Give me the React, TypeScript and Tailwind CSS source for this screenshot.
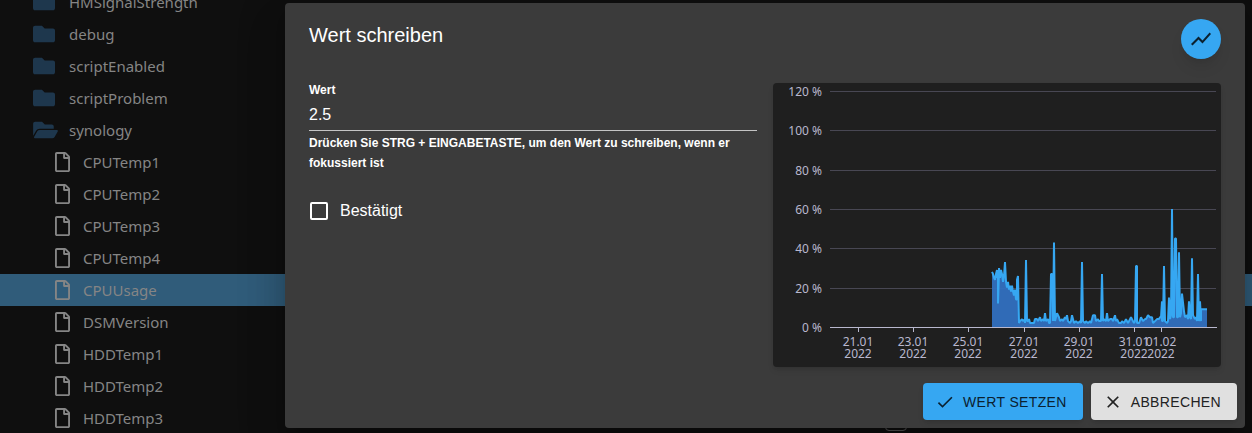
import { useState } from "react";
import { FaFolder, FaFolderOpen, FaRegFile } from "react-icons/fa";
import { MdCheck, MdClose, MdShowChart } from "react-icons/md";

type TreeItem = {
  name: string;
  kind: "folder" | "open" | "file";
};

const tree: TreeItem[] = [
  { name: "HMSignalStrength", kind: "folder" },
  { name: "debug", kind: "folder" },
  { name: "scriptEnabled", kind: "folder" },
  { name: "scriptProblem", kind: "folder" },
  { name: "synology", kind: "open" },
  { name: "CPUTemp1", kind: "file" },
  { name: "CPUTemp2", kind: "file" },
  { name: "CPUTemp3", kind: "file" },
  { name: "CPUTemp4", kind: "file" },
  { name: "CPUUsage", kind: "file" },
  { name: "DSMVersion", kind: "file" },
  { name: "HDDTemp1", kind: "file" },
  { name: "HDDTemp2", kind: "file" },
  { name: "HDDTemp3", kind: "file" },
];

// [x in the chart, CPU usage in percent]
const usage: [number, number][] = [
  [219, 28], [220, 27], [221, 25], [222, 24], [223, 27], [224, 29], [224, 25],
  [225, 28], [225, 12], [226, 28], [226, 30], [227, 25], [228, 29], [229, 27],
  [230, 23], [231, 26], [232, 33], [232, 33], [233, 23], [234, 20], [235, 23],
  [236, 19], [237, 21], [238, 18], [239, 21], [240, 18], [241, 16], [242, 19],
  [243, 14], [244, 14], [244, 24], [245, 26], [246, 2], [247, 3], [249, 4],
  [250, 3], [252, 4], [252, 2], [253, 34], [253, 34], [254, 3], [255, 3],
  [256, 4], [257, 2], [259, 2], [261, 2], [262, 4], [264, 4], [265, 3],
  [267, 5], [268, 3], [270, 4], [271, 3], [272, 7], [273, 3], [275, 4],
  [276, 2], [277, 2], [278, 27], [279, 27], [280, 3], [281, 43], [281, 43],
  [282, 3], [284, 7], [286, 5], [287, 3], [289, 4], [290, 3], [292, 5],
  [293, 4], [294, 6], [295, 3], [297, 2], [298, 3], [299, 6], [301, 2],
  [303, 3], [305, 2], [307, 3], [308, 2], [309, 33], [309, 33], [310, 3],
  [312, 2], [313, 3], [315, 2], [317, 3], [318, 2], [320, 6], [322, 6],
  [323, 3], [325, 4], [326, 3], [328, 3], [329, 27], [329, 27], [330, 3],
  [331, 4], [333, 3], [334, 7], [335, 3], [337, 4], [339, 4], [340, 3],
  [342, 6], [343, 3], [344, 4], [346, 2], [348, 2], [349, 3], [351, 2],
  [353, 4], [355, 2], [356, 3], [358, 5], [360, 3], [361, 2], [362, 3],
  [363, 31], [364, 31], [364, 2], [366, 2], [368, 5], [370, 3], [372, 4],
  [373, 4], [375, 6], [377, 5], [379, 5], [380, 2], [382, 3], [384, 4],
  [386, 4], [387, 5], [388, 5], [389, 13], [389, 3], [390, 3], [391, 31],
  [391, 31], [392, 3], [394, 2], [395, 3], [396, 15], [396, 15], [397, 4],
  [398, 6], [399, 60], [399, 60], [400, 5], [401, 5], [402, 45], [403, 45],
  [404, 5], [405, 5], [406, 38], [406, 38], [407, 5], [408, 7], [409, 17],
  [409, 17], [411, 8], [412, 5], [414, 6], [415, 4], [416, 13], [417, 5],
  [418, 4], [419, 35], [419, 35], [420, 6], [422, 4], [423, 5], [424, 3],
  [425, 27], [425, 27], [426, 3], [427, 13], [428, 3], [428, 9], [434, 9],
];

const days = [
  { x: 85, label: "21.01" },
  { x: 140, label: "23.01" },
  { x: 195, label: "25.01" },
  { x: 251, label: "27.01" },
  { x: 306, label: "29.01" },
  { x: 361, label: "31.01" },
  { x: 388, label: "01.02" },
];

const BASE = 244;
const toY = (value: number) => BASE - (value * 236) / 120;

function UsageChart() {
  const line = usage.map(([x, v]) => `${x},${toY(v).toFixed(1)}`).join(" ");

  return (
    <svg
      viewBox="0 0 448 284"
      role="img"
      aria-label="CPUUsage"
      className="block w-full rounded bg-[#1f1f1f] font-['Noto_Sans',sans-serif] text-[12px] shadow-md"
    >
      {[0, 20, 40, 60, 80, 100, 120].map((value) => {
        const y = Math.round(toY(value));
        return (
          <g key={value}>
            {value > 0 && (
              <rect x={57} y={y} width={386} height={1} fill="#484753" />
            )}
            <text x={49} y={y + 5} textAnchor="end" fill="#b9b8ce">
              {value} %
            </text>
          </g>
        );
      })}
      <polygon
        points={`219,${BASE} ${line} 434,${BASE}`}
        fill="#3170c0"
        fillOpacity={0.95}
      />
      <polyline
        points={line}
        fill="none"
        stroke="#36a7f2"
        strokeWidth={2}
        strokeLinejoin="bevel"
      />
      <rect x={57} y={BASE} width={387} height={1} fill="#b9b8ce" />
      {days.map((day) => (
        <g key={day.label} fill="#b9b8ce" textAnchor="middle">
          <rect x={day.x} y={BASE} width={1} height={5} />
          <text x={day.x} y={263}>
            {day.label}
          </text>
          <text x={day.x} y={275}>
            2022
          </text>
        </g>
      ))}
    </svg>
  );
}

function TreeRow({ item }: { item: TreeItem }) {
  const selected = item.name === "CPUUsage";
  const isFile = item.kind === "file";

  return (
    <li
      className={`flex h-8 items-center ${isFile ? "pl-[55px]" : "pl-[33px]"} ${
        selected ? "bg-[#305c7a]" : ""
      }`}
    >
      <span
        className={`flex shrink-0 ${
          isFile ? "w-7 text-[#858585]" : "w-9 text-[#1e374d]"
        }`}
      >
        {item.kind === "folder" && <FaFolder className="h-[22px] w-[22px]" />}
        {item.kind === "open" && <FaFolderOpen className="h-[22px] w-[25px]" />}
        {isFile && <FaRegFile className="h-5 w-[15px]" />}
      </span>
      <span className="text-[#858585]">{item.name}</span>
    </li>
  );
}

export default function App() {
  const [value, setValue] = useState("2.5");
  const [ack, setAck] = useState(false);

  return (
    <div className="relative h-screen overflow-hidden bg-[#0f0f0f] font-['Liberation_Sans',Arial,sans-serif]">
      <ul className="-mt-[14px] font-['Noto_Sans',sans-serif] text-[15px]">
        {tree.map((item) => (
          <TreeRow key={item.name} item={item} />
        ))}
      </ul>
      <div className="absolute bottom-[2px] left-[885px] h-6 w-[22px] rounded border border-[#5a5a5a]" />

      <div className="absolute inset-0 pt-[3px] pr-[7px] pl-[285px]">
        <div
          role="dialog"
          aria-labelledby="dialog-title"
          className="rounded bg-[#3b3b3b] text-white shadow-[0_11px_15px_-7px_rgba(0,0,0,0.2),0_24px_38px_3px_rgba(0,0,0,0.14),0_9px_46px_8px_rgba(0,0,0,0.12)]"
        >
          <div className="flex items-start justify-between px-6 pt-4">
            <h2 id="dialog-title" className="text-xl leading-8">
              Wert schreiben
            </h2>
            <button
              type="button"
              aria-label="Diagramm"
              className="flex h-10 w-10 items-center justify-center rounded-full bg-[#36a7f2] text-[#0b2130] shadow-lg"
            >
              <MdShowChart className="h-6 w-6" />
            </button>
          </div>

          <div className="grid grid-cols-2 gap-4 px-6 pt-6 pb-2">
            <div>
              <label htmlFor="value" className="block text-xs leading-[14px] font-bold">
                Wert
              </label>
              <input
                id="value"
                type="text"
                value={value}
                onChange={(e) => setValue(e.target.value)}
                aria-describedby="value-help"
                className="block h-[34px] w-full border-b border-[#c4c4c4] bg-transparent pt-[2px] text-base outline-none"
              />
              <p id="value-help" className="pt-[2px] text-xs leading-5 font-bold">
                Drücken Sie STRG + EINGABETASTE, um den Wert zu schreiben, wenn
                er fokussiert ist
              </p>
              <label className="mt-[26px] ml-px flex w-fit items-center gap-3 text-base">
                <input
                  type="checkbox"
                  checked={ack}
                  onChange={(e) => setAck(e.target.checked)}
                  className="h-[18px] w-[18px] appearance-none rounded-xs border-2 border-white checked:bg-[#36a7f2]"
                />
                Bestätigt
              </label>
            </div>
            <UsageChart />
          </div>

          <div className="flex justify-end gap-2 p-2">
            <button
              type="button"
              className="flex h-[37px] items-center gap-2 rounded bg-[#36a7f2] px-4 text-sm tracking-wide text-[#0b2130] shadow-md"
            >
              <MdCheck className="-ml-1 h-5 w-5" />
              WERT SETZEN
            </button>
            <button
              type="button"
              className="flex h-[37px] items-center gap-2 rounded bg-[#e0e0e0] px-4 text-sm tracking-wide text-[#222222] shadow-md"
            >
              <MdClose className="-ml-1 h-5 w-5" />
              ABBRECHEN
            </button>
          </div>
        </div>
      </div>
    </div>
  );
}
